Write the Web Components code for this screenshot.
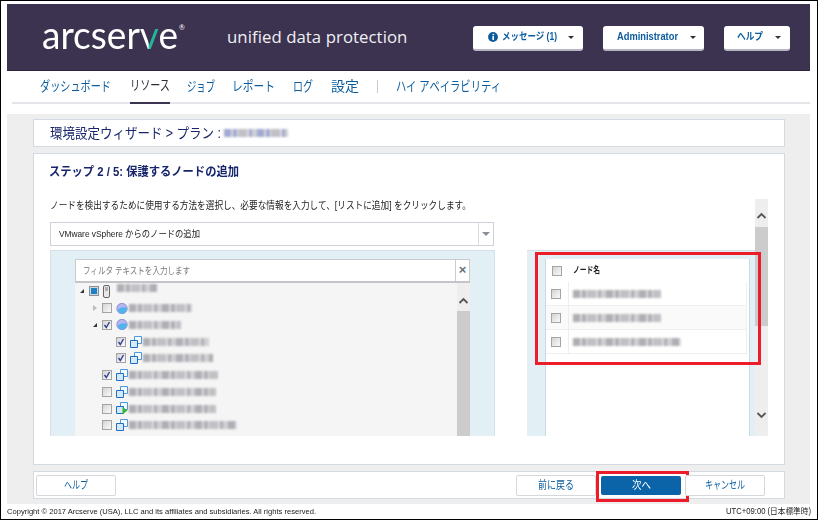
<!DOCTYPE html>
<html lang="ja"><head><meta charset="utf-8"><title>arcserve</title>
<style>
html,body{margin:0;padding:0;background:#fff}
body{width:818px;height:520px;overflow:hidden;font-family:"Liberation Sans","Noto Sans CJK JP",sans-serif;font-feature-settings:"palt"}
</style></head><body>
<udp-page>
  <udp-header></udp-header>
  <udp-nav></udp-nav>
  <udp-content>
    <udp-panel class="crumb"></udp-panel>
    <udp-wizard></udp-wizard>
    <udp-actions></udp-actions>
  </udp-content>
  <udp-foot></udp-foot>
</udp-page>
<script>
const FONT='"Liberation Sans","Noto Sans CJK JP",sans-serif';
function def(name,css,html,init){
  customElements.define(name,class extends HTMLElement{
    connectedCallback(){
      if(this.shadowRoot)return;
      const r=this.attachShadow({mode:'open'});
      const h=typeof html==='function'?html(this):html;
      r.innerHTML='<style>'+css+'</style>'+h;
      if(init)init(this,r);
    }
  });
}
const chev=(d)=>`<svg width="13" height="10" viewBox="0 0 13 10"><path d="${d==='up'?'M2.5 7 6.5 3 10.500 7':'M2.500 3 6.500 7 10.500 3'}" fill="none" stroke="#555" stroke-width="1.800"/></svg>`;

/* narrow-kana text: fixed advance width, glyphs condensed to fit it */
def('fit-text',`:host{display:inline-block;white-space:nowrap;flex:none}
span{display:inline-block;transform-origin:0 50%}`,`<span><slot></slot></span>`,(h,r)=>{
  const s=r.querySelector('span'),w=parseFloat(h.getAttribute('w'));
  const n=s.getBoundingClientRect().width;
  h.style.width=w+'px';
  if(n>0)s.style.transform='scaleX('+(w/n)+')';
});

def('udp-page',`:host{display:flex;flex-direction:column;box-sizing:border-box;width:818px;height:520px;border:1px solid #000;padding:3px 7px 0 6px}`,'<slot></slot>');

def('udp-header',`:host{display:flex;align-items:center;height:67px;flex:none;background:#3b3350;border-bottom:1px solid #2c2640;box-sizing:border-box;padding:0 20px 0 35px}
.logo{font:400 39px/1 Lato,"Open Sans",sans-serif;color:#fff;width:185px;display:flex;align-items:flex-start;margin-top:-5px}
.logo b{font-weight:400;background:linear-gradient(90deg,#fff 0 42%,#23b59b 52%);-webkit-background-clip:text;background-clip:text;color:transparent}
.logo sup{font-size:7px;line-height:1;margin:9px 0 0 1px}
.tag{font:500 16.800px/1 "Open Sans",sans-serif;color:#f1f0f4;letter-spacing:.05px;margin-top:0}
.btns{margin-left:auto;display:flex;gap:20px;margin-top:2px}`,
`<div class="logo"><fit-text w="136">arcser<b>v</b>e</fit-text><sup>®</sup></div><div class="tag">unified data protection</div>
<div class="btns"><udp-menu w="110" pad="15" t="55" g="11" info>メッセージ (1)</udp-menu><udp-menu w="101" pad="14" t="61" g="12">Administrator</udp-menu><udp-menu w="66" pad="13" t="26" g="12">ヘルプ</udp-menu></div>`);

def('udp-menu',`:host{display:flex;align-items:center;box-sizing:border-box;height:25px;background:#fff;border-radius:3px;border-bottom:2px solid #b9b6c4;font:700 10px/1 ${FONT};color:#0b5c9e}
svg{flex:none;margin-right:4px}i{width:0;height:0;border:3px solid transparent;border-top-color:#333;border-bottom:0}`,
h=>`<style>:host{width:${h.getAttribute('w')}px;padding-left:${h.getAttribute('pad')}px}i{margin-left:${h.getAttribute('g')}px}</style>${h.hasAttribute('info')?'<svg width="10" height="10" viewBox="0 0 11 11"><circle cx="5.500" cy="5.500" r="5.400" fill="#0b5c9e"/><rect x="5" y="2" width="1.800" height="1.500" fill="#fff"/><rect x="4.800" y="4.500" width="1.800" height="4.200" fill="#fff"/></svg>':''}<fit-text w="${h.getAttribute('t')}"><slot></slot></fit-text><i></i>`);

def('udp-nav',`:host{display:flex;align-items:stretch;height:33px;flex:none;box-sizing:border-box;border-bottom:2px solid #e4e5e9;margin:0 0 10px 5px;padding-left:28px;font:400 13.500px/1 ${FONT};color:#0b5c9e}
a{display:flex;align-items:center;padding-bottom:2px;box-sizing:border-box;height:33px}
a.on{color:#2b2b3a;border-bottom:2px solid #3b3350}
.sep{width:1px;height:13px;background:#c9c9cf;align-self:center;margin:0 18px}`,
`<a style="margin-right:19px"><fit-text w="71">ダッシュボード</fit-text></a><a class="on" style="margin-right:17px"><fit-text w="40">リソース</fit-text></a><a style="margin-right:17px"><fit-text w="28">ジョブ</fit-text></a><a style="margin-right:18px"><fit-text w="43">レポート</fit-text></a><a style="margin-right:18px"><fit-text w="20">ログ</fit-text></a><a><fit-text w="28">設定</fit-text></a><span class="sep"></span><a><fit-text w="105">ハイ アベイラビリティ</fit-text></a>`);

def('udp-content',`:host{display:flex;flex-direction:column;gap:6px;background:#eeeeef;height:390px;flex:none;box-sizing:border-box;padding:5px 25px 5px 26px}`,'<slot></slot>');

def('udp-panel',`:host{display:flex;align-items:center;height:28px;box-sizing:border-box;background:#fff;border:1px solid #d3dae2;padding-left:16px;font:400 14px/1 ${FONT};color:#17256b;gap:3px;flex:none}`,
`<fit-text w="171">環境設定ウィザード &gt; プラン :</fit-text><blur-bar w="64" tone="#a3a9d2"></blur-bar>`);

def('blur-bar',`:host{display:inline-block;height:8px;flex:none;filter:blur(1.300px)}`,
h=>{const t=h.getAttribute('tone')||'#aeaeb3';return `<style>:host{width:${h.getAttribute('w')}px;background:repeating-linear-gradient(90deg,${t} 0 7px,#dcdce0 7px 9px,${t} 9px 13px,#e6e6ea 13px 14px,#c0c0c5 14px 23px,#dedee2 23px 25px,${t} 25px 28px,#d0d0d4 28px 33px)}</style>`});

def('udp-wizard',`:host{display:block;height:312px;box-sizing:border-box;background:#fff;border:1px solid #d3dae2;padding:9px 0 0 16px;flex:none}
h2{margin:0 0 0 -1px;font:700 12px/18px ${FONT};color:#17256b;height:18px}
.row{display:flex;margin-top:18px;height:237px;width:718px}
.main{width:705px}
.desc{font:400 10px/13px ${FONT};color:#222;height:13px;white-space:nowrap}
.sb{width:13px;background:#eee;display:flex;flex-direction:column;align-items:center}
.sb .u{height:28px;display:flex;align-items:center;padding-top:6px;box-sizing:border-box}
.sb .t{height:99px;background:#ccc;width:13px}
.sb .d{margin-top:auto;height:26px;display:flex;align-items:flex-start}
.cols{display:flex;gap:32px;margin-top:4px}
`,`<h2><fit-text w="190">ステップ 2 / 5: 保護するノードの追加</fit-text></h2>
<div class="row"><div class="main">
<div class="desc"><fit-text w="421">ノードを検出するために使用する方法を選択し、必要な情報を入力して、[リストに追加] をクリックします。</fit-text></div>
<udp-select>VMware vSphere からのノードの追加</udp-select>
<div class="cols"><udp-tree-pane></udp-tree-pane><udp-node-pane></udp-node-pane></div>
</div><div class="sb"><div class="u">${chev('up')}</div><div class="t"></div><div class="d">${chev('down')}</div></div></div>`);

def('udp-select',`:host{display:flex;align-items:center;box-sizing:border-box;width:444px;height:24px;margin-top:10px;background:#fff;border:1px solid #cfd3d9;font:400 9.500px/1 ${FONT};color:#222}
span{flex:1;padding-left:8px}
i{width:14px;height:22px;border-left:1px solid #d8dbdf;display:flex;align-items:center;justify-content:center}
i::after{content:"";border:4px solid transparent;border-top:4px solid #8a8f96;border-bottom:0}`,`<span><fit-text w="141"><slot></slot></fit-text></span><i></i>`);

def('udp-tree-pane',`:host{display:block;width:445px;height:186px;box-sizing:border-box;background:#e2f0f5;border:1px solid #d5e0e8;border-bottom:0;padding:8px 24px 0}
.f{display:flex;height:24px;box-sizing:border-box;background:#fff;border:1px solid #c9cbd0;border-bottom:2px solid #c3c3c9}
.f span{flex:1;font:400 9.500px/21px ${FONT};color:#777;padding-left:7px}
.f i{width:13px;border-left:1px solid #ccc;font:700 13px/20px "Liberation Sans",sans-serif;color:#68707a;text-align:center;font-style:normal}
.b{display:flex;height:153px;background:#f5f5f5;overflow:hidden}
.l{flex:1}
.s{width:13px;background:#ccc;display:flex;flex-direction:column}
.s div{height:28px;background:#eee;display:flex;align-items:center;padding-top:8px;box-sizing:border-box}`,
`<div class="f"><span><fit-text w="107">フィルタ テキストを入力します</fit-text></span><i>×</i></div>
<div class="b"><div class="l">
<tree-row pad="5" arrow="open" box="root" icon="server" w="40"></tree-row>
<tree-row pad="18" arrow="closed" icon="vc" w="63"></tree-row>
<tree-row pad="18" arrow="open" box="on" icon="vc" w="52"></tree-row>
<tree-row pad="32" box="on" icon="vm" w="66"></tree-row>
<tree-row pad="32" box="on" icon="vm" w="70"></tree-row>
<tree-row pad="18" box="on" icon="vm" w="89"></tree-row>
<tree-row pad="18" icon="vm" w="87"></tree-row>
<tree-row pad="18" icon="vmrun" w="87"></tree-row>
<tree-row pad="18" icon="vm" w="108"></tree-row>
</div><div class="s"><div>${chev('up')}</div></div></div>`);

const VM=`<path d="M4.500 .5h7v7h-7z" fill="#f4f9fe" stroke="#4a9ade"/><path d="M.5 4.500h7v7h-7z" fill="#d4e8f8" stroke="#1f6fc0"/>`;
const ICONS={
 server:`<svg width="7" height="13" viewBox="0 0 7 13"><rect x=".5" y=".5" width="6" height="12" rx="1.500" fill="#e8e8e8" stroke="#666"/><path d="M2 3h3M2 5h3" stroke="#777"/></svg>`,
 vc:`<svg width="12" height="11" viewBox="0 0 12 11"><circle cx="6" cy="5.500" r="5.200" fill="#b4b6ec" stroke="#7a84cc" stroke-width=".8"/><path d="M1.500 7C4 4.200 8 3.800 11 5 10.800 8 8.500 10.500 6 10.500 4 10.500 2.200 9 1.500 7z" fill="#4fb4ee"/></svg>`,
 vm:`<svg width="12" height="12" viewBox="0 0 12 12">${VM}</svg>`,
 vmrun:`<svg width="12" height="13" viewBox="0 0 12 13">${VM}<path d="M6.500 5 11.500 8.500 6.500 12.500z" fill="#35b83a"/></svg>`
};
def('check-box',`:host{display:inline-block;width:10px;height:10px;box-sizing:border-box;border:1px solid #a4a4a6;background:linear-gradient(135deg,#d4d4d4,#fafafa);flex:none;position:relative}
:host([state=root]){border-color:#8b9097;background:#1f82c4;box-shadow:inset 0 0 0 1px #cfd6dc}
svg{display:block}`,
h=>h.getAttribute('state')==='on'?`<svg width="8" height="8" viewBox="0 0 8 8"><path d="M1.500 4 3.300 6.500 6.500 1" fill="none" stroke="#2d3f8e" stroke-width="1.400"/></svg>`:'');

def('tree-row',`:host{display:flex;align-items:center;height:16.750px;box-sizing:border-box}
.a{width:9px;flex:none;display:flex;align-items:center;justify-content:flex-start}
.o{border-style:solid;border-width:0 0 4px 4px;border-color:transparent transparent #333 transparent}
.c{border-style:solid;border-width:3.500px 0 3.500px 4px;border-color:transparent transparent transparent #bbb}
.i{width:13px;margin-left:4px;flex:none;display:flex;align-items:center}`,
h=>{const a=h.getAttribute('arrow'),ic=h.getAttribute('icon');const w=h.getAttribute('w');
 const root=ic==='server';
 return `<style>:host{padding-left:${h.getAttribute('pad')}px}</style><div class="a">${a==='open'?'<span class="o"></span>':a==='closed'?'<span class="c"></span>':''}</div>
<check-box state="${h.getAttribute('box')||''}"></check-box><div class="i" style="${root?'width:14px':''}">${ICONS[ic]}</div><blur-bar w="${w}" style="margin-top:${root?-6:0}px"></blur-bar>`});

def('udp-node-pane',`:host{display:block;position:relative;width:228px;height:186px;box-sizing:border-box;background:#e2f0f5;border-top:1px solid #d5e0e8;padding:8px 5px 0 18px}
.w{background:#fff;height:177px;border:solid #c7dbe4;border-width:0 1px 0 1px;box-sizing:border-box;padding-right:1px}
.red{position:absolute;left:8px;top:1px;width:226px;height:113px;box-sizing:border-box;border:3px solid #ec1c2a;pointer-events:none}`,
`<div class="w">
<node-row head>ノード名</node-row>
<node-row w="88"></node-row><node-row w="88" alt></node-row><node-row w="108"></node-row>
</div><div class="red"></div>`);

def('node-row',`:host{display:flex;height:24px;box-sizing:border-box;border-bottom:1px solid #eeeeee;margin-right:1px}
:host([head]){height:23px;border-bottom:0;font:700 9px/1 ${FONT};color:#222}
:host([alt]){background:#fafafa}
.c{width:23px;flex:none;display:flex;align-items:center;justify-content:center;border-right:1px solid #eee;box-sizing:border-box;padding-right:2px}
:host([head]) .c{border-right:0}
.t{flex:1;display:flex;align-items:center;padding-left:4px;border-right:1px solid #eee}
:host([head]) .t{border-right:0}`,
h=>`<div class="c"><check-box></check-box></div><div class="t">${h.hasAttribute('head')?'<fit-text w="27"><slot></slot></fit-text>':`<blur-bar w="${h.getAttribute('w')}"></blur-bar>`}</div>`);

def('udp-actions',`:host{display:flex;align-items:center;height:28px;box-sizing:border-box;background:#fff;border:1px solid #d3dae2;padding:0 19px 0 2px;flex:none;gap:4px}
.sp{flex:1}`,`<udp-btn t="24">ヘルプ</udp-btn><span class="sp"></span><udp-btn t="36" style="margin-right:1px">前に戻る</udp-btn><udp-btn t="19" primary>次へ</udp-btn><udp-btn t="40">キャンセル</udp-btn>`);

def('udp-btn',`:host{display:flex;position:relative;align-items:center;justify-content:center;width:80px;height:21px;box-sizing:border-box;border:1px solid #d5d7db;border-radius:2px;background:#fff;color:#0b5c9e;font:400 11px/1 ${FONT};flex:none}
:host([primary]){background:#0b63a8;border:0;height:19px;color:#fff}
.red{position:absolute;left:-5px;top:-5px;width:93px;height:31px;box-sizing:border-box;border:3px solid #ec1c2a}`,
h=>`<fit-text w="${h.getAttribute('t')}"><slot></slot></fit-text>${h.hasAttribute('primary')?'<span class="red"></span>':''}`);

def('udp-foot',`:host{display:flex;justify-content:space-between;align-items:center;height:15px;flex:none;font:400 7.500px/1 "Liberation Sans","Noto Sans CJK JP",sans-serif;color:#222;margin-right:-1px;padding-top:1px;box-sizing:border-box}
.r{font-size:8.200px}`,`<fit-text w="309">Copyright © 2017 Arcserve (USA), LLC and its affiliates and subsidiaries. All rights reserved.</fit-text><fit-text class="r" w="85">UTC+09:00 (日本標準時)</fit-text>`);
</script>
</body></html>
